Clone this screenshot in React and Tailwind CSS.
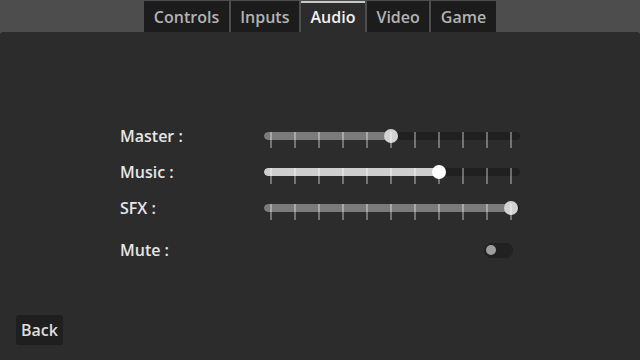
import React from "react";

const font = { fontFamily: '"Open Sans", "Noto Sans", sans-serif' };

function Slider({ value, fill, grab }) {
  const ticks = Array.from({ length: 11 }, (_, i) => i);
  const pos = 7 + value * 240;
  return (
    <div className="relative w-[256px] h-[36px]">
      <div className="absolute left-0 right-0 top-[14px] h-[8px] rounded-full bg-[#202020] overflow-hidden">
        <div className={`h-full rounded-full ${fill}`} style={{ width: pos + 2 }} />
      </div>
      <div
        className={`absolute top-[11px] w-[14px] h-[14px] rounded-full ${grab}`}
        style={{ left: pos - 7 }}
      />
      {ticks.map((i) => (
        <div
          key={i}
          className="absolute top-[14px] w-[2px] h-[16px] bg-white/35"
          style={{ left: 6 + i * 24 }}
        />
      ))}
    </div>
  );
}

export default function App() {
  const tabs = ["Controls", "Inputs", "Audio", "Video", "Game"];
  return (
    <div className="w-[640px] h-[360px] flex flex-col bg-[#4d4d4d] overflow-hidden" style={font}>
      <div className="h-[32px] shrink-0 flex justify-center items-end gap-[2px]">
        {tabs.map((t) =>
          t === "Audio" ? (
            <div
              key={t}
              className="h-[31px] px-[9.5px] flex items-center bg-[#2c2c2c] border-t-2 border-[#c8c8c8] text-[16px] font-semibold text-[#f2f2f2]"
            >
              <span className="-mt-[1px]">{t}</span>
            </div>
          ) : (
            <div
              key={t}
              className="h-[31px] px-[9.5px] flex items-center bg-[#1c1c1c] text-[16px] font-semibold text-[#b3b3b3]"
            >
              <span className="mt-[1px]">{t}</span>
            </div>
          )
        )}
      </div>
      <div className="flex-1 bg-[#2c2c2c] rounded-t-[3px] flex flex-col pt-[86px] pb-[15px] px-[16px]">
        <div className="ml-[104px] flex flex-col text-[16px] font-semibold text-[#e6e6e6]">
          <div className="flex items-center h-[36px]">
            <div className="w-[144px]">Master :</div>
            <Slider value={0.5} fill="bg-[#7b7b7b]" grab="bg-[#d2d2d2]" />
          </div>
          <div className="flex items-center h-[36px]">
            <div className="w-[144px]">Music :</div>
            <Slider value={0.7} fill="bg-[#cecece]" grab="bg-white" />
          </div>
          <div className="flex items-center h-[36px]">
            <div className="w-[144px]">SFX :</div>
            <Slider value={1} fill="bg-[#7b7b7b]" grab="bg-[#d2d2d2]" />
          </div>
          <div className="flex items-center h-[36px] mt-[6px]">
            <div className="w-[364px]">Mute :</div>
            <div className="w-[29px] h-[15px] rounded-full bg-[#212121] flex items-center pl-[2px]">
              <div className="w-[10px] h-[10px] rounded-full bg-[#9d9d9d]" />
            </div>
          </div>
        </div>
        <div className="mt-auto">
          <div className="inline-flex h-[30px] items-center px-[5px] rounded-[3px] bg-[#1f1f1f] text-[16px] font-semibold text-[#dfdfdf]">
            Back
          </div>
        </div>
      </div>
    </div>
  );
}
